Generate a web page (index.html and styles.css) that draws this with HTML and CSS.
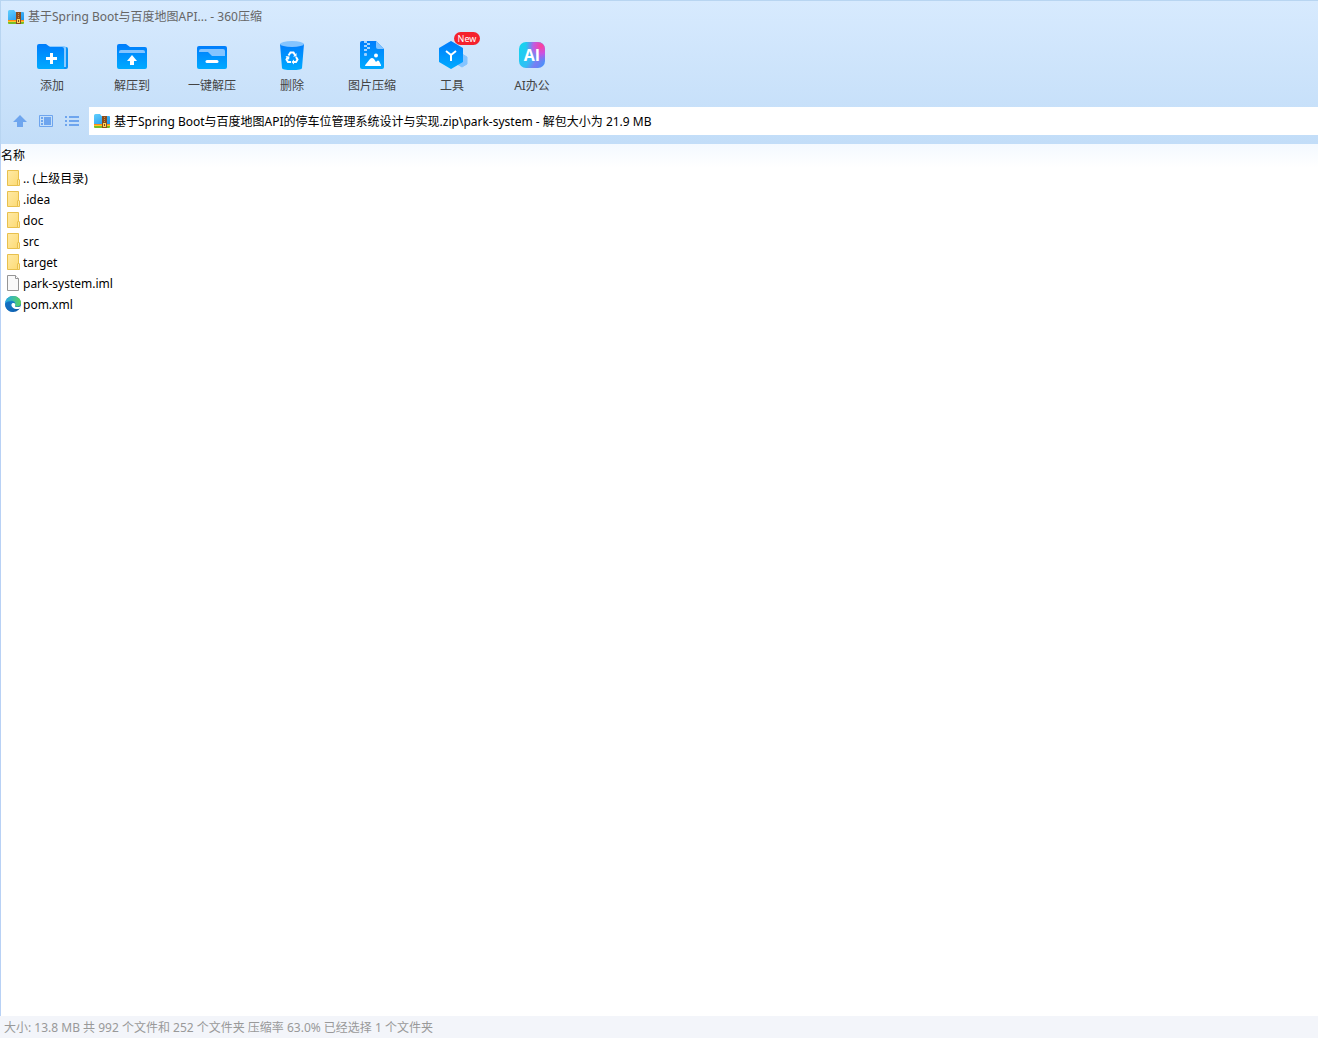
FILE: index.html
```html
<!DOCTYPE html>
<html lang="zh-CN">
<head>
    <meta charset="utf-8">
    <meta name="viewport" content="width=device-width, initial-scale=1">
    <title>基于Spring Boot与百度地图API... - 360压缩</title>
    <link rel="stylesheet" href="styles.css">
</head>
<body>
    <!-- shared shapes and gradients -->
    <svg class="defs" width="0" height="0" aria-hidden="true">
        <defs>
            <linearGradient id="blue" x1="0" y1="0" x2="0" y2="1">
                <stop offset="0" stop-color="#007dfc"/>
                <stop offset="1" stop-color="#00aaff"/>
            </linearGradient>
            <linearGradient id="sky" x1="0" y1="0" x2="1" y2="1">
                <stop offset="0" stop-color="#62d0fd"/>
                <stop offset="1" stop-color="#1f93ec"/>
            </linearGradient>
            <linearGradient id="yellow" x1="0" y1="0" x2="1" y2="1">
                <stop offset="0" stop-color="#ffeaa6"/>
                <stop offset="1" stop-color="#fcda74"/>
            </linearGradient>
            <linearGradient id="ai" x1="0" y1="0.2" x2="1" y2="0.8">
                <stop offset="0" stop-color="#16d3ee"/>
                <stop offset="0.5" stop-color="#2fc0f5"/>
                <stop offset="0.75" stop-color="#7b7cf2"/>
                <stop offset="1" stop-color="#4a90fa"/>
            </linearGradient>
            <radialGradient id="ai-pink" cx="0.85" cy="0.15" r="0.6">
                <stop offset="0" stop-color="#ff3f96"/>
                <stop offset="0.5" stop-color="#d84be0" stop-opacity="0.85"/>
                <stop offset="1" stop-color="#9b60f0" stop-opacity="0"/>
            </radialGradient>
            <linearGradient id="edge-a" x1="0" y1="0" x2="1" y2="1">
                <stop offset="0" stop-color="#1d9fe0"/>
                <stop offset="1" stop-color="#0b4fa0"/>
            </linearGradient>
            <linearGradient id="edge-b" x1="0" y1="0" x2="1" y2="0">
                <stop offset="0" stop-color="#26a8ea"/>
                <stop offset="1" stop-color="#5ad45c"/>
            </linearGradient>
        </defs>
        <symbol id="archive" viewBox="0 0 16 16">
            <path d="M0 2.500Q0 1 1.500 1H6l1.500 2H15q1 0 1 1v7H0z" fill="url(#sky)"/>
            <path d="M0 11h16v1H0z" fill="#ff8b12"/>
            <path d="M0 12h16v1H0z" fill="#ffc62a"/>
            <path d="M0 13h16v1q0 1-1 1H1q-1 0-1-1z" fill="#78bd25"/>
            <path d="M8 3h5v12H8z" fill="#8a4c1c"/>
            <path d="M10 4h1v1h-1zM10 6h1v1h-1zM10 8h1v1h-1z" fill="#c98d4a"/>
            <path d="M9 10h3v4H9z" fill="#ffd45a"/>
            <path d="M10 11h1v2h-1z" fill="#7c4a20"/>
        </symbol>
        <symbol id="folder" viewBox="0 0 16 16">
            <path d="M2.500.5h11v15h-11z" fill="url(#yellow)" stroke="#e8c04d"/>
            <path d="M12.500 15.500V10q0-.5.500-.5h1q.5 0 .5.500v5.500z" fill="#ffe79c" stroke="#e8c04d"/>
        </symbol>
        <symbol id="file" viewBox="0 0 16 16">
            <path d="M2.500.5h8l3 3v12h-11z" fill="#f9f9f9" stroke="#959595"/>
            <path d="M10.500.5v3h3" fill="#fff" stroke="#959595"/>
        </symbol>
        <symbol id="edge" viewBox="0 0 16 16">
            <circle cx="8" cy="8" r="8" fill="url(#edge-a)"/>
            <path d="M0 8C.5 3 4 0 8 0c5 0 8 3.500 8 6.500 0 3-2.200 4.200-4 4.200-2 0-2.500-.8-2-1.700C11 7 9 4.800 6 4.800 3 4.800.6 6 0 8z" fill="url(#edge-b)"/>
            <path d="M5.500 6.200C4 9 4.500 13.500 9.500 15.800 4 16.500 0 12.800 0 8c.8-2 3-2.500 5.500-1.800z" fill="#1268bd" opacity=".8"/>
            <path d="M6.500 8.200c.4-1 1.500-1.500 2.500-1.200 1.300.5 1.500 1.500 1 2.400-.4.900.6 1.700 2.300 1.700 1.600 0 2.900-.5 3.700-1.200-.3 1.300-1 2.200-1.700 2.800-2 .8-5 .4-6.600-1.200-1-1-1.500-2.200-1.200-3.300z" fill="#fff"/>
        </symbol>
    </svg>

    <header class="header">
        <div class="titlebar">
            <svg class="icon16" aria-hidden="true"><use href="#archive"/></svg>
            <span>基于Spring Boot与百度地图API... - 360压缩</span>
        </div>

        <nav class="toolbar">
            <button type="button" class="tool">
                <svg viewBox="0 0 36 36" aria-hidden="true">
                    <path d="M10 11h22q2 0 2 2v18q0 2-2 2H10z" fill="#0a92f5"/>
                    <path d="M15 10h15q2 0 2 2v19H15z" fill="#8bcaff"/>
                    <path d="M3 10q0-2 2-2h7l4 3h12q2 0 2 2v20H5q-2 0-2-2z" fill="url(#blue)"/>
                    <path d="M17.500 17v11M12 22.500h11" stroke="#fff" stroke-width="3"/>
                </svg>
                <span>添加</span>
            </button>
            <button type="button" class="tool">
                <svg viewBox="0 0 36 36" aria-hidden="true">
                    <path d="M3 10q0-2 2-2h7l4 3h15q2 0 2 2v18q0 2-2 2H5q-2 0-2-2z" fill="url(#blue)"/>
                    <path d="M5 17v-1q0-2 2-2h22q2 0 2 2v1z" fill="#84c4ff"/>
                    <path d="M18 19l5 6h-3v4h-4v-4h-3z" fill="#fff"/>
                </svg>
                <span>解压到</span>
            </button>
            <button type="button" class="tool">
                <svg viewBox="0 0 36 36" aria-hidden="true">
                    <rect x="3" y="10" width="30" height="23" rx="2" fill="url(#blue)"/>
                    <path d="M5 15q0-2 2-2h22q2 0 2 2v5H18l-4-4H5z" fill="#84c4ff"/>
                    <path d="M13 25.500h10" stroke="#fff" stroke-width="3" stroke-linecap="round"/>
                </svg>
                <span>一键解压</span>
            </button>
            <button type="button" class="tool">
                <svg viewBox="0 0 36 36" aria-hidden="true">
                    <path d="M6 8h24l-2 24q0 2-10 2T8 32z" fill="url(#blue)"/>
                    <ellipse cx="18" cy="8" rx="12" ry="3" fill="#84c4ff"/>
                    <g fill="none" stroke="#fff" stroke-width="2">
                        <path d="M14.500 19.500l2-3h3l1.500 2.500"/>
                        <path d="M22 21l1.500 2.500-1.500 2.500h-2.500"/>
                        <path d="M17 26h-3l-1.500-2.500 1-2"/>
                    </g>
                    <path d="M22.500 17v3.500H19zM20 23.500v5l-2.500-2.500zM11.500 20l4 .5-.5 3.500z" fill="#fff"/>
                </svg>
                <span>删除</span>
            </button>
            <button type="button" class="tool">
                <svg viewBox="0 0 36 36" aria-hidden="true">
                    <path d="M6 7q0-2 2-2h14l8 8v18q0 2-2 2H8q-2 0-2-2z" fill="url(#blue)"/>
                    <path d="M22 5l8 8h-6q-2 0-2-2z" fill="#84c4ff"/>
                    <path d="M10 5h3v2h-3zM13 7h3v2h-3zM10 9h3v2h-3zM13 11h3v2h-3zM10 13h3v2h-3z" fill="#a5d3ff"/>
                    <rect x="10" y="17" width="3" height="3" rx="1" fill="#9dd1ff"/>
                    <circle cx="22" cy="19.500" r="2" fill="#fff"/>
                    <path d="M11 30q0-1 1-2l4-5q2-2 4 0l2 3 1-1q1-1 2 0l2 4v1z" fill="#fff"/>
                </svg>
                <span>图片压缩</span>
            </button>
            <button type="button" class="tool">
                <svg viewBox="0 0 36 36" aria-hidden="true">
                    <path d="M28 18l5 3v7l-5 3-5-3v-7z" fill="#84c4ff" stroke="#84c4ff" stroke-linejoin="round"/>
                    <path d="M17 6l11 6.500v13L17 32 6 25.500v-13z" fill="url(#blue)" stroke="url(#blue)" stroke-width="2" stroke-linejoin="round"/>
                    <path d="M12 15l5 4 5-4M17 19v6" fill="none" stroke="#fff" stroke-width="2"/>
                </svg>
                <span>工具</span>
                <em class="badge">New</em>
            </button>
            <button type="button" class="tool">
                <svg viewBox="0 0 36 36" aria-hidden="true">
                    <rect x="5" y="6" width="26" height="26" rx="7" fill="url(#ai)"/>
                    <rect x="5" y="6" width="26" height="26" rx="7" fill="url(#ai-pink)"/>
                    <text x="18" y="25" class="ai-text">AI</text>
                </svg>
                <span>AI办公</span>
            </button>
        </nav>

        <div class="pathbar">
            <button type="button" class="mini" aria-label="上级目录">
                <svg viewBox="0 0 16 16"><path d="M8 2l7 7h-4v5H5V9H1z"/></svg>
            </button>
            <button type="button" class="mini" aria-label="预览">
                <svg viewBox="0 0 16 16">
                    <path d="M1.500 2.500h13v11h-13z" fill="none" stroke="#6ea5ee"/>
                    <path d="M3 4h2v2H3zM3 7h2v2H3zM3 10h2v2H3zM6 4h7v8H6z"/>
                </svg>
            </button>
            <button type="button" class="mini" aria-label="列表">
                <svg viewBox="0 0 16 16"><path d="M1 3h2v2H1zM1 7h2v2H1zM1 11h2v2H1zM5 3h10v2H5zM5 7h10v2H5zM5 11h10v2H5z"/></svg>
            </button>
            <label class="address">
                <svg class="icon16" aria-hidden="true"><use href="#archive"/></svg>
                <input type="text" aria-label="路径" value="基于Spring Boot与百度地图API的停车位管理系统设计与实现.zip\park-system - 解包大小为 21.9 MB">
            </label>
        </div>
    </header>

    <main class="files">
        <table class="list">
            <thead>
                <tr><th scope="col">名称</th></tr>
            </thead>
            <tbody>
                <tr><td><div class="name"><svg class="icon16"><use href="#folder"/></svg>.. (上级目录)</div></td></tr>
                <tr><td><div class="name"><svg class="icon16"><use href="#folder"/></svg>.idea</div></td></tr>
                <tr><td><div class="name"><svg class="icon16"><use href="#folder"/></svg>doc</div></td></tr>
                <tr><td><div class="name"><svg class="icon16"><use href="#folder"/></svg>src</div></td></tr>
                <tr><td><div class="name"><svg class="icon16"><use href="#folder"/></svg>target</div></td></tr>
                <tr><td><div class="name"><svg class="icon16"><use href="#file"/></svg>park-system.iml</div></td></tr>
                <tr><td><div class="name"><svg class="icon16"><use href="#edge"/></svg>pom.xml</div></td></tr>
            </tbody>
        </table>
    </main>

    <footer class="status">大小: 13.8 MB 共 992 个文件和 252 个文件夹 压缩率 63.0% 已经选择 1 个文件夹</footer>
</body>
</html>
```
FILE: styles.css
```css
* {
    box-sizing: border-box;
}
body {
    display: flex;
    flex-direction: column;
    min-height: 100vh;
    margin: 0;
    background: #fff;
    color: #000;
    font-family: "Noto Sans", "Noto Sans CJK SC", sans-serif;
    font-size: 12px;
    line-height: 18px;
}
button, input {
    padding: 0;
    border: 0;
    background: none;
    color: inherit;
    font: inherit;
}
svg {
    display: block;
    flex: none;
}
.defs {
    position: absolute;
}
.icon16 {
    width: 16px;
    height: 16px;
}

/* header */
.header {
    border-top: 1px solid #b8d5f1;
    border-left: 1px solid #b8d5f1;
    background: linear-gradient(#d7eafe, #c2ddf8);
}
.titlebar {
    display: flex;
    align-items: center;
    gap: 4px;
    height: 31px;
    padding-left: 7px;
    color: #666;
}
.toolbar {
    display: flex;
    padding: 4px 11px 0;
}
.tool {
    position: relative;
    display: flex;
    flex-direction: column;
    align-items: center;
    justify-content: flex-start;
    gap: 5px;
    width: 80px;
    height: 71px;
    color: #444;
}
.tool svg {
    width: 36px;
    height: 36px;
}
.ai-text {
    fill: #fff;
    font-family: "Open Sans", sans-serif;
    font-size: 16px;
    font-weight: 700;
    text-anchor: middle;
}
.badge {
    position: absolute;
    top: -4px;
    left: 42px;
    width: 26px;
    height: 13px;
    border-radius: 7px;
    background: #f5222d;
    color: #fff;
    font-size: 9px;
    font-style: normal;
    line-height: 13px;
    text-align: center;
}

/* path */
.pathbar {
    display: flex;
    align-items: center;
    padding: 0 0 9px 6px;
}
.mini {
    display: flex;
    justify-content: center;
    width: 26px;
}
.mini svg {
    width: 16px;
    height: 16px;
    fill: #6ea5ee;
}
.address {
    display: flex;
    flex: 1;
    align-items: center;
    gap: 4px;
    height: 28px;
    margin-left: 4px;
    padding-left: 5px;
    background: #fff;
}
.address input {
    flex: 1;
    min-width: 0;
    padding-top: 2px;
    outline: none;
}

/* files */
.files {
    flex: 1;
    border-left: 1px solid #b8d1f5;
}
.list {
    width: 100%;
    border-collapse: collapse;
}
.list th {
    height: 24px;
    padding: 0;
    background: linear-gradient(#f3f9ff, #fff);
    font-weight: 400;
    text-align: left;
}
.list td {
    padding: 0;
}
.name {
    display: flex;
    align-items: center;
    gap: 2px;
    height: 21px;
    padding-left: 4px;
}
.name svg {
    margin-bottom: 1px;
}

.status {
    padding: 3px 4px 1px;
    background: #f3f5fa;
    color: #999;
}
```
